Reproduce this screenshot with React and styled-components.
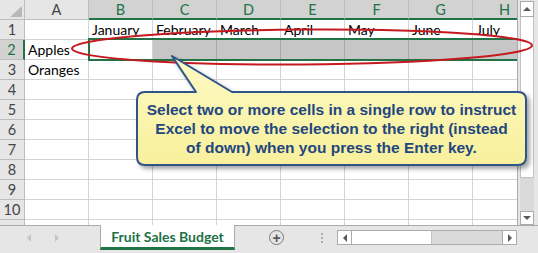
import React from 'react';
import styled, { createGlobalStyle } from 'styled-components';

const GREEN = '#217346';
const GRID = '#d4d4d4';

const GlobalStyle = createGlobalStyle`
  html, body { margin: 0; padding: 0; background: #fff; }
  body { font-family: Lato, "Liberation Sans", sans-serif; }
`;

const Window = styled.div`
  position: relative;
  width: 538px;
  height: 253px;
  overflow: hidden;
  display: flex;
  flex-direction: column;
  background: #e6e6e6;
`;

const Main = styled.div`
  display: flex;
  height: 225px;
`;

const SheetView = styled.div`
  position: relative;
  width: 518px;
  height: 225px;
  box-sizing: border-box;
  border-right: 1px solid #ababab;
  overflow: hidden;
  background: #fff;
`;

const Grid = styled.div`
  display: grid;
  grid-template-columns: 25px repeat(8, 64px);
  grid-template-rows: repeat(12, 20px);
`;

const Cell = styled.div`
  box-sizing: border-box;
  border-right: 1px solid ${GRID};
  border-bottom: 1px solid ${GRID};
  background: ${({ $shade }) => ($shade ? '#c6c6c6' : '#fff')};
  border-right-color: ${({ $shade }) => ($shade ? '#a9a9a9' : GRID)};
  font-size: 14px;
  line-height: 19px;
  color: #000;
  padding-left: 3px;
  white-space: nowrap;
  overflow: visible;
`;

const ColHead = styled.div`
  box-sizing: border-box;
  background: ${({ $sel }) => ($sel ? '#d2d2d2' : '#e6e6e6')};
  border-right: 1px solid #bdbdbd;
  border-bottom: ${({ $sel }) => ($sel ? `2px solid ${GREEN}` : '1px solid #bdbdbd')};
  color: ${({ $sel }) => ($sel ? GREEN : '#444')};
  font-size: 14.5px;
  line-height: 19px;
  text-align: center;
`;

const RowHead = styled.div`
  box-sizing: border-box;
  background: ${({ $sel }) => ($sel ? '#d2d2d2' : '#e6e6e6')};
  border-bottom: 1px solid #bdbdbd;
  border-right: ${({ $sel }) => ($sel ? `2px solid ${GREEN}` : '1px solid #bdbdbd')};
  color: ${({ $sel }) => ($sel ? GREEN : '#444')};
  font-size: 14.5px;
  line-height: 19px;
  text-align: center;
`;

const Corner = styled.div`
  box-sizing: border-box;
  background: #e6e6e6;
  border-right: 1px solid #bdbdbd;
  border-bottom: 1px solid #bdbdbd;
  display: flex;
  align-items: flex-end;
  justify-content: flex-end;
  padding: 0 2px 2px 0;
  &::after {
    content: '';
    width: 12px;
    height: 11px;
    background: #b8b8b8;
    clip-path: polygon(100% 0, 100% 100%, 0 100%);
  }
`;

const Selection = styled.div`
  position: absolute;
  left: 88px;
  top: 38px;
  width: 460px;
  height: 23px;
  box-sizing: border-box;
  border: 2px solid ${GREEN};
  pointer-events: none;
`;

const VScroll = styled.div`
  width: 20px;
  display: flex;
  flex-direction: column;
  padding: 1px 4px 0 2px;
  box-sizing: border-box;
  background: #e6e6e6;
`;

const ScrollBtn = styled.div`
  box-sizing: border-box;
  height: ${({ $h }) => $h || 15}px;
  width: ${({ $w }) => ($w ? `${$w}px` : 'auto')};
  background: #fff;
  border: 1px solid #ababab;
  display: flex;
  align-items: center;
  justify-content: center;
  flex-shrink: 0;
`;

const Thumb = styled.div`
  box-sizing: border-box;
  background: #fff;
  border: 1px solid #c2c2c2;
  border-top: none;
  ${({ $v }) => ($v ? 'height: 161px;' : 'width: 80px; border-top: 1px solid #ababab; border-bottom: 1px solid #ababab; border-left: none;')}
  flex-shrink: 0;
`;

const Track = styled.div`
  flex: 1;
  background: #dadada;
  ${({ $h }) => ($h ? 'border-top: 1px solid #ababab; border-bottom: 1px solid #ababab;' : '')}
`;

const Arrow = styled.span`
  width: 0;
  height: 0;
  border-style: solid;
  border-color: transparent;
  ${({ $dir, $c = '#5a5a5a', $s = 4 }) => {
    if ($dir === 'up') return `border-width: 0 ${$s}px ${$s}px; border-bottom-color: ${$c};`;
    if ($dir === 'down') return `border-width: ${$s}px ${$s}px 0; border-top-color: ${$c};`;
    if ($dir === 'left') return `border-width: ${$s}px ${$s}px ${$s}px 0; border-right-color: ${$c};`;
    return `border-width: ${$s}px 0 ${$s}px ${$s}px; border-left-color: ${$c};`;
  }}
`;

const TabBar = styled.div`
  display: flex;
  height: 28px;
  background: #e6e6e6;
`;

const NavArea = styled.div`
  width: 100px;
  box-sizing: border-box;
  border-top: 1px solid #ababab;
  display: flex;
  align-items: center;
  padding-left: 27px;
  gap: 24px;
  padding-bottom: 3px;
`;

const SheetTab = styled.div`
  width: 135px;
  height: 25px;
  box-sizing: border-box;
  background: #fff;
  border-left: 1px solid #ababab;
  border-right: 1px solid #ababab;
  border-bottom: 3px solid ${GREEN};
  color: ${GREEN};
  font-weight: 700;
  font-size: 14px;
  display: flex;
  align-items: center;
  justify-content: center;
  padding-top: 1px;
`;

const RightArea = styled.div`
  flex: 1;
  box-sizing: border-box;
  border-top: 1px solid #ababab;
  display: flex;
  align-items: center;
  padding-left: 34px;
  padding-bottom: 4px;
`;

const AddSheet = styled.div`
  width: 13px;
  height: 13px;
  border: 1.5px solid #7a7a7a;
  border-radius: 50%;
  display: flex;
  align-items: center;
  justify-content: center;
  color: #5a5a5a;
  font-size: 14px;
  font-weight: 700;
  line-height: 1;
  font-family: "Liberation Sans", sans-serif;
`;

const Dots = styled.div`
  margin-left: 37px;
  display: flex;
  flex-direction: column;
  gap: 2px;
  span {
    width: 2px;
    height: 2px;
    background: #b0b0b0;
  }
`;

const HScroll = styled.div`
  margin-left: 14px;
  width: 180px;
  height: 15px;
  display: flex;
`;

const Overlay = styled.svg`
  position: absolute;
  left: 0;
  top: 0;
  pointer-events: none;
`;

const CalloutWrap = styled.div`
  position: absolute;
  left: 137px;
  top: 56px;
  width: 389px;
  height: 109px;
`;

const CalloutText = styled.div`
  position: absolute;
  left: 0;
  top: 36px;
  width: 389px;
  height: 73px;
  display: flex;
  align-items: center;
  justify-content: center;
  text-align: center;
  font-family: "Liberation Sans", Arial, sans-serif;
  font-weight: 700;
  font-size: 15.5px;
  line-height: 19px;
  color: #23467e;
`;

const cols = ['A', 'B', 'C', 'D', 'E', 'F', 'G', 'H'];
const data = {
  1: ['', 'January', 'February', 'March', 'April', 'May', 'June', 'July'],
  2: ['Apples', '', '', '', '', '', '', ''],
  3: ['Oranges', '', '', '', '', '', '', ''],
};

function Callout() {
  return (
    <CalloutWrap>
      <svg width="395" height="115" style={{ position: 'absolute', left: 0, top: 0, overflow: 'visible' }}>
        <defs>
          <linearGradient id="cfill" x1="0" y1="0" x2="0" y2="1">
            <stop offset="0" stopColor="#fdfac4" />
            <stop offset="1" stopColor="#f8f09c" />
          </linearGradient>
          <filter id="cshadow" x="-10%" y="-10%" width="120%" height="130%">
            <feDropShadow dx="3" dy="3" stdDeviation="2" floodColor="#000" floodOpacity="0.35" />
          </filter>
        </defs>
        <path
          d="M 8 36 L 59 36 L 35 0 L 95 36 L 381 36 Q 389 36 389 44 L 389 101 Q 389 109 381 109 L 8 109 Q 0 109 0 101 L 0 44 Q 0 36 8 36 Z"
          fill="url(#cfill)"
          stroke="#2f5587"
          strokeWidth="2"
          strokeLinejoin="round"
          filter="url(#cshadow)"
        />
      </svg>
      <CalloutText>
        <div>
          Select two or more cells in a single row to instruct
          <br />
          Excel to move the selection to the right (instead
          <br />
          of down) when you press the Enter key.
        </div>
      </CalloutText>
    </CalloutWrap>
  );
}

export default function App() {
  const rows = Array.from({ length: 11 }, (_, i) => i + 1);
  return (
    <>
      <GlobalStyle />
      <Window>
        <Main>
          <SheetView>
            <Grid>
              <Corner />
              {cols.map((c, i) => (
                <ColHead key={c} $sel={i > 0}>{c}</ColHead>
              ))}
              {rows.map((r) => (
                <React.Fragment key={r}>
                  <RowHead $sel={r === 2}>{r <= 10 ? r : ''}</RowHead>
                  {cols.map((c, i) => (
                    <Cell key={c} $shade={r === 2 && i > 1}>
                      {data[r] ? data[r][i] : ''}
                    </Cell>
                  ))}
                </React.Fragment>
              ))}
            </Grid>
            <Selection />
          </SheetView>
          <VScroll>
            <ScrollBtn $h={16}><Arrow $dir="up" /></ScrollBtn>
            <Thumb $v />
            <Track />
            <ScrollBtn $h={14}><Arrow $dir="down" /></ScrollBtn>
          </VScroll>
        </Main>
        <TabBar>
          <NavArea>
            <Arrow $dir="left" $c="#c4c4c4" />
            <Arrow $dir="right" $c="#c4c4c4" />
          </NavArea>
          <SheetTab>Fruit Sales Budget</SheetTab>
          <RightArea>
            <AddSheet>+</AddSheet>
            <Dots><span /><span /><span /></Dots>
            <HScroll>
              <ScrollBtn $w={15} $h={15}><Arrow $dir="left" /></ScrollBtn>
              <Thumb />
              <Track $h />
              <ScrollBtn $w={15} $h={15}><Arrow $dir="right" /></ScrollBtn>
            </HScroll>
          </RightArea>
        </TabBar>
        <Overlay width="538" height="253">
          <ellipse
            cx="302"
            cy="47"
            rx="230"
            ry="17.5"
            transform="rotate(-0.4 302 47)"
            fill="none"
            stroke="#c41a1f"
            strokeWidth="2"
          />
        </Overlay>
        <Callout />
      </Window>
    </>
  );
}
